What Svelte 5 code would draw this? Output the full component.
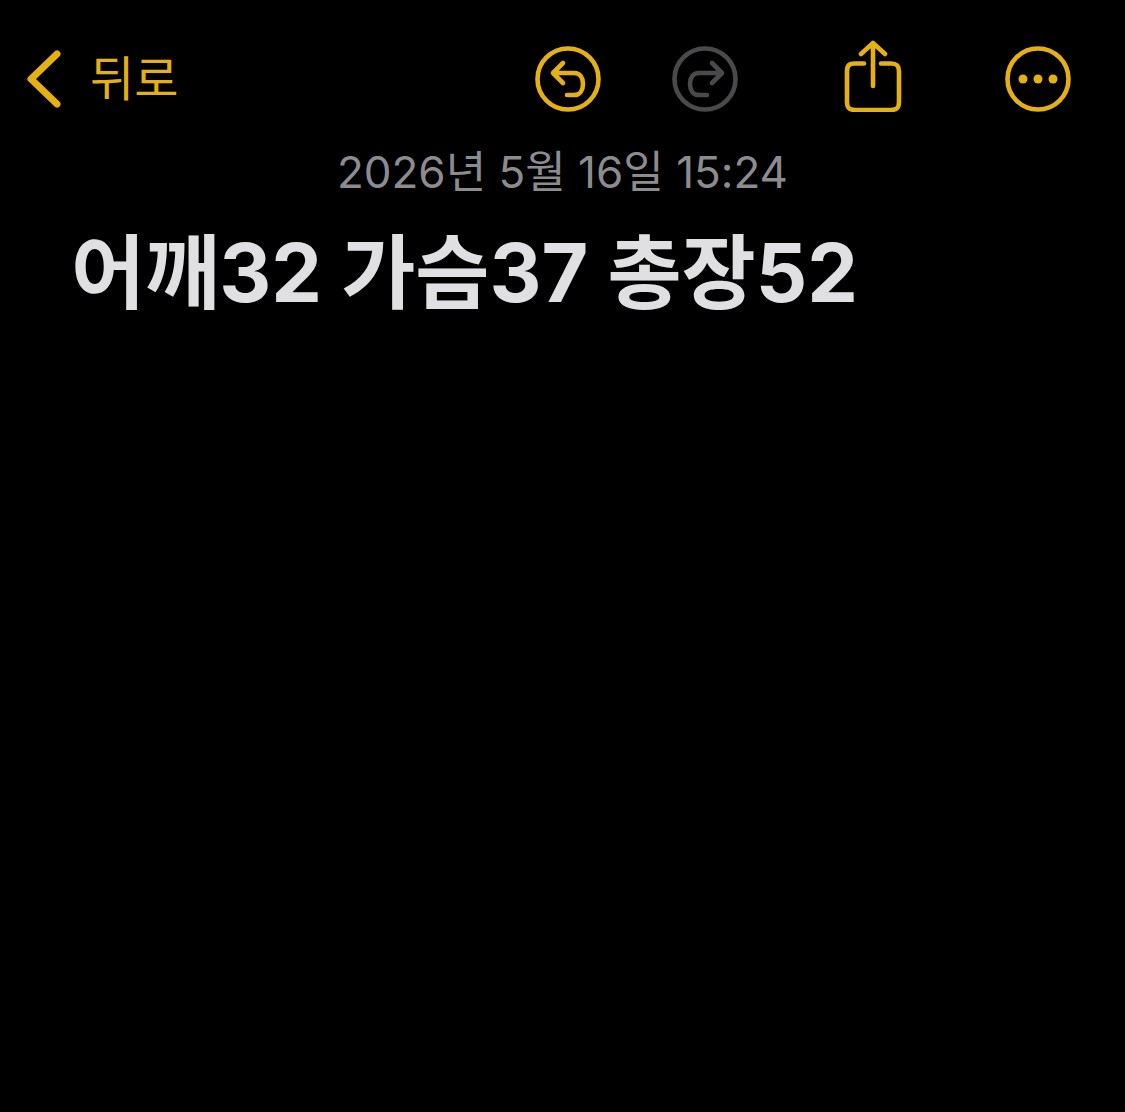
<script>
  let date = "2026년 5월 16일 15:24"
  let title = "어깨32 가슴37 총장52"
</script>

<main class="page">
  <nav class="bar">
    <button class="back">
      <svg width="36" height="60" viewBox="0 0 36 60">
        <path d="M31 5 L5 30 L31 55" />
      </svg>
      <span>뒤로</span>
    </button>

    <div class="tools">
      <button class="undo">
        <svg width="66" height="66" viewBox="0 0 66 66">
          <circle cx="33" cy="33" r="30.5" />
          <path d="M28 17 L18 27 L28 37 M18 27 H39 C45 27 48 32 48 38 C48 44 45 49 39 49 H32" />
        </svg>
      </button>
      <button class="redo">
        <svg width="66" height="66" viewBox="0 0 66 66">
          <circle cx="33" cy="33" r="30.5" />
          <path d="M40 17 L50 27 L40 37 M50 27 H27 C21 27 18 32 18 38 C18 44 21 49 27 49 H35" />
        </svg>
      </button>
      <button class="share">
        <svg width="58" height="72" viewBox="0 0 58 72">
          <path d="M20 23.5 H11 C5 23.5 3 25.5 3 31.5 V62 C3 68 5 70 11 70 H47 C53 70 55 68 55 62 V31.5 C55 25.5 53 23.5 47 23.5 H37 M29 46 V3 M17 14 L29 3 L41 14" />
        </svg>
      </button>
      <button class="more">
        <svg width="66" height="66" viewBox="0 0 66 66">
          <circle cx="33" cy="33" r="30.5" />
          <circle class="dot" cx="18" cy="33" r="4.5" />
          <circle class="dot" cx="33" cy="33" r="4.5" />
          <circle class="dot" cx="48" cy="33" r="4.5" />
        </svg>
      </button>
    </div>
  </nav>

  <p class="date">{date}</p>
  <h1>{title}</h1>
</main>

<style>
  :global(body) {
    background: #000;
  }

  .page {
    height: 1112px;
    background: #000;
    font-family: Inter, "Noto Sans CJK KR", sans-serif;
    overflow: hidden;
  }

  .bar {
    display: flex;
    justify-content: space-between;
    align-items: center;
    padding: 46px 54px 0 26px;
  }

  button {
    display: flex;
    align-items: center;
    padding: 0;
    border: none;
    background: none;
    color: #e5b012;
    font-family: inherit;
  }

  svg {
    display: block;
    fill: none;
    stroke: #e5b012;
    stroke-linecap: round;
    stroke-linejoin: round;
  }

  .back svg {
    stroke-width: 7;
  }

  .back span {
    margin-left: 28px;
    font-size: 48px;
    line-height: 60px;
  }

  .tools {
    display: flex;
    align-items: center;
  }

  .tools svg {
    stroke-width: 4.6;
  }

  .redo {
    margin-left: 71px;
  }

  .redo svg {
    stroke: #4a4a4c;
  }

  .share {
    margin: -6px 0 0 106px;
  }

  .more {
    margin-left: 103px;
  }

  .tools .dot {
    fill: #e5b012;
    stroke: none;
  }

  .date {
    margin: 32px 0 0;
    text-align: center;
    color: #8c8c90;
    font-size: 44px;
    line-height: 56px;
  }

  h1 {
    margin: 28px 0 0 71px;
    color: #e0e0e2;
    font-size: 80.6px;
    font-weight: 700;
    line-height: 90px;
    white-space: nowrap;
  }
</style>
